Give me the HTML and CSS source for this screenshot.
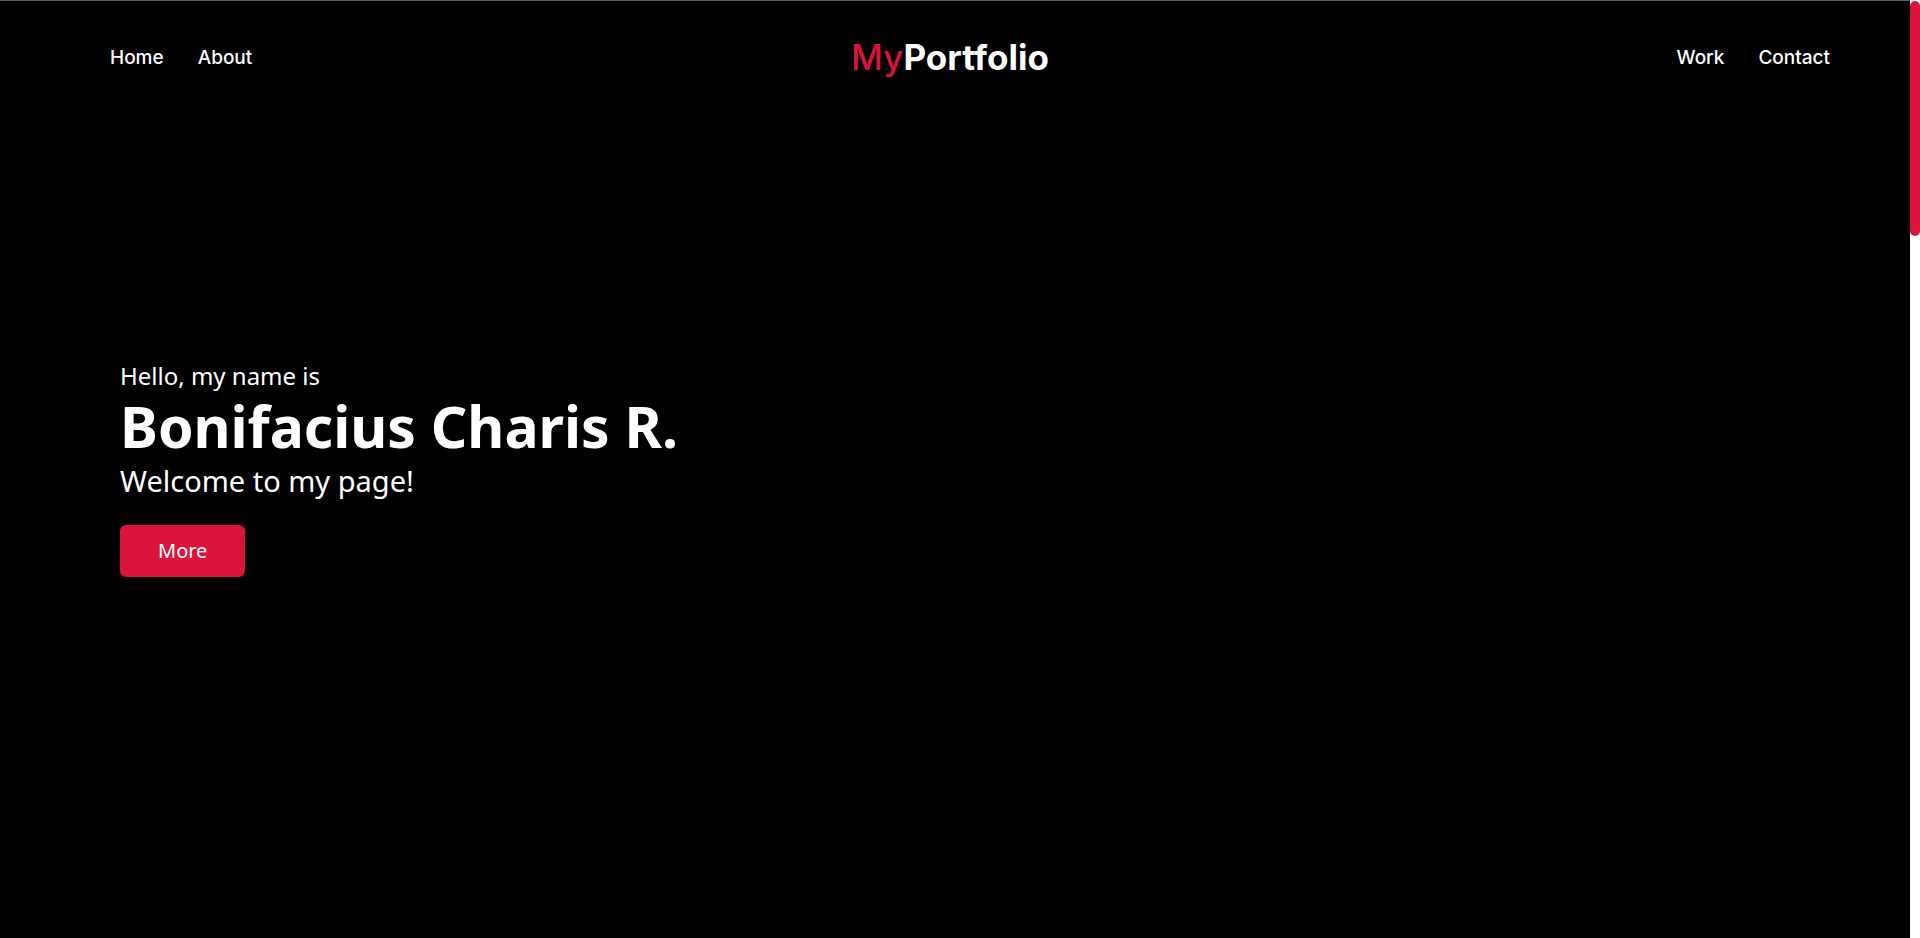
FILE: index.html
```
<!DOCTYPE html>
<html lang="en">
<head>
<meta charset="utf-8">
<meta name="viewport" content="width=device-width, initial-scale=1">
<title>MyPortfolio</title>
<link rel="stylesheet" href="styles.css">
</head>
<body>
<div class="page">
  <header class="navbar">
    <nav class="menu menu-start" aria-label="Main">
      <a href="#home">Home</a>
      <a href="#about">About</a>
    </nav>
    <a class="logo" href="#home"><span class="logo-accent">My</span>Portfolio</a>
    <nav class="menu menu-end" aria-label="More">
      <a href="#work">Work</a>
      <a href="#contact">Contact</a>
    </nav>
  </header>
  <main class="hero" id="home">
    <p class="greeting">Hello, my name is</p>
    <h1 class="name">Bonifacius Charis R.</h1>
    <p class="welcome">Welcome to my page!</p>
    <button class="more" type="button">More</button>
  </main>
</div>
<div class="scroll-track"><div class="scroll-thumb"></div></div>
</body>
</html>
```
FILE: styles.css
```
* {
  box-sizing: border-box;
  margin: 0;
  padding: 0;
}

body {
  display: grid;
  grid-template-columns: 1fr 10px;
  min-height: 100vh;
  background: #000;
  color: #fff;
  font-family: "Noto Sans", sans-serif;
}

.page {
  display: flex;
  flex-direction: column;
  border-top: 1px solid #5c5c5c;
}

.navbar {
  display: grid;
  grid-template-columns: 1fr auto 1fr;
  align-items: center;
  padding: 31px 80px 31px 70px;
  font-family: Inter, sans-serif;
}

.navbar a {
  color: #fff;
  text-decoration: none;
}

.menu {
  display: flex;
  gap: 34px;
  font-size: 19px;
  font-weight: 500;
}

.menu-start {
  padding-left: 40px;
}

.menu-end {
  justify-content: flex-end;
}

.logo {
  font-size: 35px;
  font-weight: 700;
  line-height: 50px;
}

.navbar .logo-accent {
  color: crimson;
  font-weight: 500;
}

.hero {
  padding: 243px 120px 80px;
}

.greeting {
  font-size: 24px;
  line-height: 40px;
}

.name {
  font-size: 57px;
  font-weight: 700;
  line-height: 60px;
}

.welcome {
  font-size: 29px;
  line-height: 50px;
}

.more {
  margin-top: 19px;
  padding: 12px 36px;
  border: 2px solid crimson;
  border-radius: 6px;
  background: crimson;
  color: #fff;
  font: 400 20px/24px "Noto Sans", sans-serif;
}

.scroll-track {
  background: #fff;
}

.scroll-thumb {
  height: 25vh;
  margin-top: 1px;
  border-radius: 6px;
  background: crimson;
}
```
